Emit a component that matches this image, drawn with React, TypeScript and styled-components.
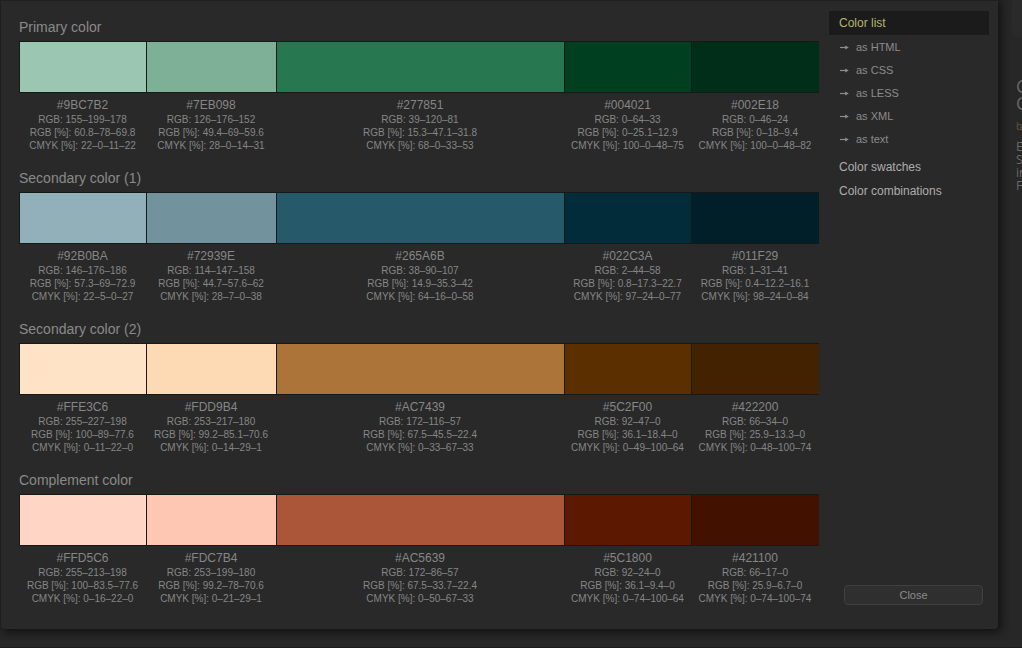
import React from 'react';
import styled, { createGlobalStyle } from 'styled-components';

const GlobalStyle = createGlobalStyle`
  * { box-sizing: border-box; }
  body {
    margin: 0;
    background: #272727;
    color: #868686;
    font-family: "Liberation Sans", Helvetica, Arial, sans-serif;
  }
`;

const Page = styled.div`
  display: grid;
  grid-template-columns: minmax(0, 1fr) 24px;
  align-items: start;
  min-height: 100vh;
  border-bottom: 1px solid #1f1b1b;
`;

const Dialog = styled.section`
  position: relative;
  display: grid;
  grid-template-columns: minmax(0, 1fr) 160px;
  column-gap: 10px;
  padding: 10px 9px 24px 18px;
  margin-left: 1px;
  background: #292929;
  border-top: 1px solid #202020;
  border-radius: 0 0 4px 4px;
  box-shadow: 2px 2px 8px 1px #111111;
`;

const Palettes = styled.main`
  display: flex;
  flex-direction: column;
  gap: 10px;
`;

const Palette = styled.table`
  width: 100%;
  table-layout: fixed;
  border-collapse: separate;
  border-spacing: 0;

  caption {
    padding: 7px 0 4px;
    font-size: 14px;
    line-height: 19px;
    text-align: left;
    color: #8a8a8a;
  }
`;

const Column = styled.col<{ $share: number }>`
  width: ${(p) => p.$share}%;
`;

const Swatch = styled.td<{ $color: string }>`
  height: 52px;
  padding: 0;
  background: ${(p) => p.$color};
  border: 1px solid #141a17;
  border-width: 1px 0 1px 1px;
`;

const Values = styled.td`
  padding: 4px 0 0;
  text-align: center;
  white-space: nowrap;
  font-size: 10px;
  line-height: 13px;
`;

const Hex = styled.div`
  font-size: 12px;
  line-height: 16px;
`;

const Sidebar = styled.aside`
  display: flex;
  flex-direction: column;
  justify-content: space-between;
`;

const Nav = styled.nav`
  display: flex;
  flex-direction: column;
`;

const NavLink = styled.a<{ $active?: boolean }>`
  padding: 0 10px;
  font-size: 12px;
  line-height: 24px;
  text-decoration: none;
  color: ${(p) => (p.$active ? '#b5b56c' : '#adadad')};
  background: ${(p) => (p.$active ? '#1b1b1b' : 'transparent')};
`;

const Formats = styled.ul`
  margin: 0 0 4px;
  padding: 1px 10px 0;
  list-style: none;
`;

const FormatLink = styled.a`
  display: flex;
  align-items: center;
  gap: 6px;
  font-size: 11px;
  line-height: 23px;
  text-decoration: none;
  color: #8c8c8c;
`;

const CloseButton = styled.button`
  height: 20px;
  margin: 0 6px 0 15px;
  padding: 0;
  font: 11px/16px "Liberation Sans", Helvetica, Arial, sans-serif;
  color: #8c8c8c;
  background: #2f2f2f;
  border: 1px solid #404040;
  border-radius: 4px;
`;

const Backdrop = styled.div`
  padding: 0 0 0 18px;
  overflow: hidden;
  white-space: nowrap;
  font-family: "Open Sans", "Liberation Sans", sans-serif;
  font-size: 12px;
  line-height: 13px;
  color: #686868;
`;

const Panel = styled.div`
  width: 40px;
  height: 38px;
  margin: 0 0 40px -4px;
  border-radius: 0 0 0 8px;
  background: #2a2a2a;
`;

const BackTitle = styled.div`
  font-size: 18px;
  line-height: 17px;
`;

const Byline = styled.div`
  padding: 8px 0 7px;
  font-size: 10px;
  line-height: 13px;
  color: #5f563f;
`;

type Tone = { hex: string; rgb: string; percent: string; cmyk: string };

const tone = (hex: string, rgb: string, percent: string, cmyk: string): Tone => ({ hex, rgb, percent, cmyk });

const columnShares = [15.875, 16.25, 36, 15.875, 16];

const palettes: { name: string; tones: Tone[] }[] = [
  {
    name: 'Primary color',
    tones: [
      tone('#9BC7B2', '155–199–178', '60.8–78–69.8', '22–0–11–22'),
      tone('#7EB098', '126–176–152', '49.4–69–59.6', '28–0–14–31'),
      tone('#277851', '39–120–81', '15.3–47.1–31.8', '68–0–33–53'),
      tone('#004021', '0–64–33', '0–25.1–12.9', '100–0–48–75'),
      tone('#002E18', '0–46–24', '0–18–9.4', '100–0–48–82'),
    ],
  },
  {
    name: 'Secondary color (1)',
    tones: [
      tone('#92B0BA', '146–176–186', '57.3–69–72.9', '22–5–0–27'),
      tone('#72939E', '114–147–158', '44.7–57.6–62', '28–7–0–38'),
      tone('#265A6B', '38–90–107', '14.9–35.3–42', '64–16–0–58'),
      tone('#022C3A', '2–44–58', '0.8–17.3–22.7', '97–24–0–77'),
      tone('#011F29', '1–31–41', '0.4–12.2–16.1', '98–24–0–84'),
    ],
  },
  {
    name: 'Secondary color (2)',
    tones: [
      tone('#FFE3C6', '255–227–198', '100–89–77.6', '0–11–22–0'),
      tone('#FDD9B4', '253–217–180', '99.2–85.1–70.6', '0–14–29–1'),
      tone('#AC7439', '172–116–57', '67.5–45.5–22.4', '0–33–67–33'),
      tone('#5C2F00', '92–47–0', '36.1–18.4–0', '0–49–100–64'),
      tone('#422200', '66–34–0', '25.9–13.3–0', '0–48–100–74'),
    ],
  },
  {
    name: 'Complement color',
    tones: [
      tone('#FFD5C6', '255–213–198', '100–83.5–77.6', '0–16–22–0'),
      tone('#FDC7B4', '253–199–180', '99.2–78–70.6', '0–21–29–1'),
      tone('#AC5639', '172–86–57', '67.5–33.7–22.4', '0–50–67–33'),
      tone('#5C1800', '92–24–0', '36.1–9.4–0', '0–74–100–64'),
      tone('#421100', '66–17–0', '25.9–6.7–0', '0–74–100–74'),
    ],
  },
];

const formats = ['HTML', 'CSS', 'LESS', 'XML', 'text'];

const Arrow = () => (
  <svg width="11" height="9" viewBox="0 0 11 9" aria-hidden="true">
    <path d="M1 4.5H8" stroke="#8c8c8c" strokeWidth="1.2" />
    <path d="M6.2 2.4L9.8 4.5L6.2 6.6Z" fill="#8c8c8c" />
  </svg>
);

export default function App() {
  return (
    <>
      <GlobalStyle />
      <Page>
        <Dialog role="dialog" aria-label="Color list">
          <Palettes>
            {palettes.map((palette) => (
              <Palette key={palette.name}>
                <caption>{palette.name}</caption>
                <colgroup>
                  {columnShares.map((share, i) => (
                    <Column key={i} $share={share} />
                  ))}
                </colgroup>
                <tbody>
                  <tr>
                    {palette.tones.map((t) => (
                      <Swatch key={t.hex} $color={t.hex} />
                    ))}
                  </tr>
                  <tr>
                    {palette.tones.map((t) => (
                      <Values key={t.hex}>
                        <Hex>{t.hex}</Hex>
                        <div>RGB: {t.rgb}</div>
                        <div>RGB [%]: {t.percent}</div>
                        <div>CMYK [%]: {t.cmyk}</div>
                      </Values>
                    ))}
                  </tr>
                </tbody>
              </Palette>
            ))}
          </Palettes>
          <Sidebar>
            <Nav>
              <NavLink href="#list" $active>Color list</NavLink>
              <Formats>
                {formats.map((format) => (
                  <li key={format}>
                    <FormatLink href={`#${format.toLowerCase()}`}>
                      <Arrow />
                      as {format}
                    </FormatLink>
                  </li>
                ))}
              </Formats>
              <NavLink href="#swatches">Color swatches</NavLink>
              <NavLink href="#combinations">Color combinations</NavLink>
            </Nav>
            <CloseButton type="button">Close</CloseButton>
          </Sidebar>
        </Dialog>
        <Backdrop>
          <Panel />
          <BackTitle>C</BackTitle>
          <BackTitle>C</BackTitle>
          <Byline>b</Byline>
          <div>E</div>
          <div>S</div>
          <div>in</div>
          <div>F</div>
        </Backdrop>
      </Page>
    </>
  );
}
